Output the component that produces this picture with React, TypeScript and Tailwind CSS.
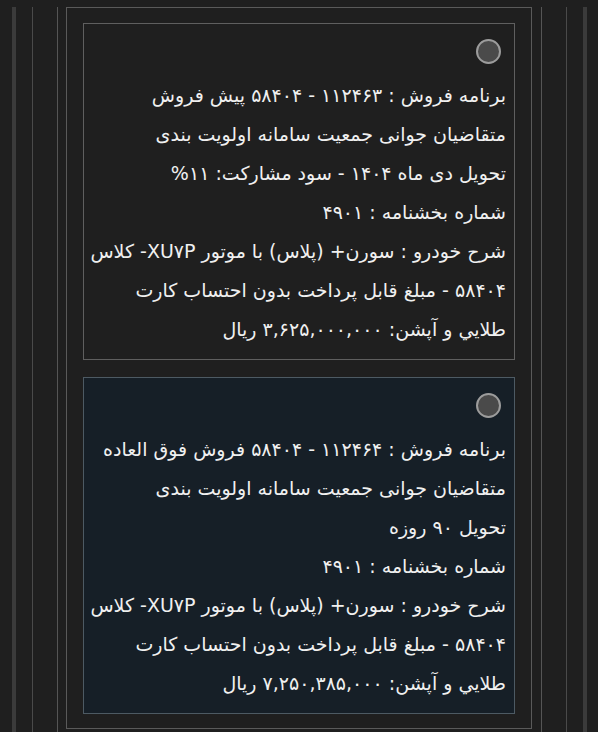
import React from "react";

const cards = [
  {
    bg: "bg-[#1f1f1f]",
    border: "border-[#5f5f5f]",
    lines: [
      "برنامه فروش : ۱۱۲۴۶۳ - ۵۸۴۰۴ پیش فروش",
      "متقاضیان جوانی جمعیت سامانه اولویت بندی",
      "تحویل دی ماه ۱۴۰۴ - سود مشارکت: ۱۱%",
      "شماره بخشنامه : ۴۹۰۱",
      "شرح خودرو : سورن+ (پلاس) با موتور XU۷P- کلاس",
      "۵۸۴۰۴ - مبلغ قابل پرداخت بدون احتساب کارت",
      "طلايي و آپشن: ۳,۶۲۵,۰۰۰,۰۰۰ ريال",
    ],
  },
  {
    bg: "bg-[#161f27]",
    border: "border-[#4d5a63]",
    lines: [
      "برنامه فروش : ۱۱۲۴۶۴ - ۵۸۴۰۴ فروش فوق العاده",
      "متقاضیان جوانی جمعیت سامانه اولویت بندی",
      "تحویل ۹۰ روزه",
      "شماره بخشنامه : ۴۹۰۱",
      "شرح خودرو : سورن+ (پلاس) با موتور XU۷P- کلاس",
      "۵۸۴۰۴ - مبلغ قابل پرداخت بدون احتساب کارت",
      "طلايي و آپشن: ۷,۲۵۰,۳۸۵,۰۰۰ ريال",
    ],
  },
];

export default function App() {
  return (
    <div className="h-[732px] w-[598px] overflow-hidden bg-[#1f1f1f] font-['DejaVu_Sans',sans-serif]">
      <div className="ml-[12px] h-full w-[575px] border-x-4 border-[#3b3b3b] px-[16px]">
        <div className="h-full border-x border-[#4a4a4a] px-[24px]">
          <div className="h-full border-x border-[#555555] pl-[8px] pr-[9px]">
            <div className="mt-[7px] flex h-[722px] flex-col gap-[17px] border border-[#5a5a5a] px-[16px] pt-[15px]">
              {cards.map((c, i) => (
                <div
                  key={i}
                  dir="rtl"
                  className={`flex h-[337px] flex-col border ${c.border} ${c.bg} px-[8px] pt-[15px]`}
                >
                  <div className="mr-[5px] h-[25px] w-[25px] rounded-full border-2 border-[#9c9c9c] bg-[#4a4a4a]" />
                  <div className="mt-[12px] text-[19px] leading-[39px] text-[#f0f0f0]">
                    {c.lines.map((l, j) => (
                      <div key={j} className="whitespace-nowrap">
                        {l}
                      </div>
                    ))}
                  </div>
                </div>
              ))}
            </div>
          </div>
        </div>
      </div>
    </div>
  );
}
